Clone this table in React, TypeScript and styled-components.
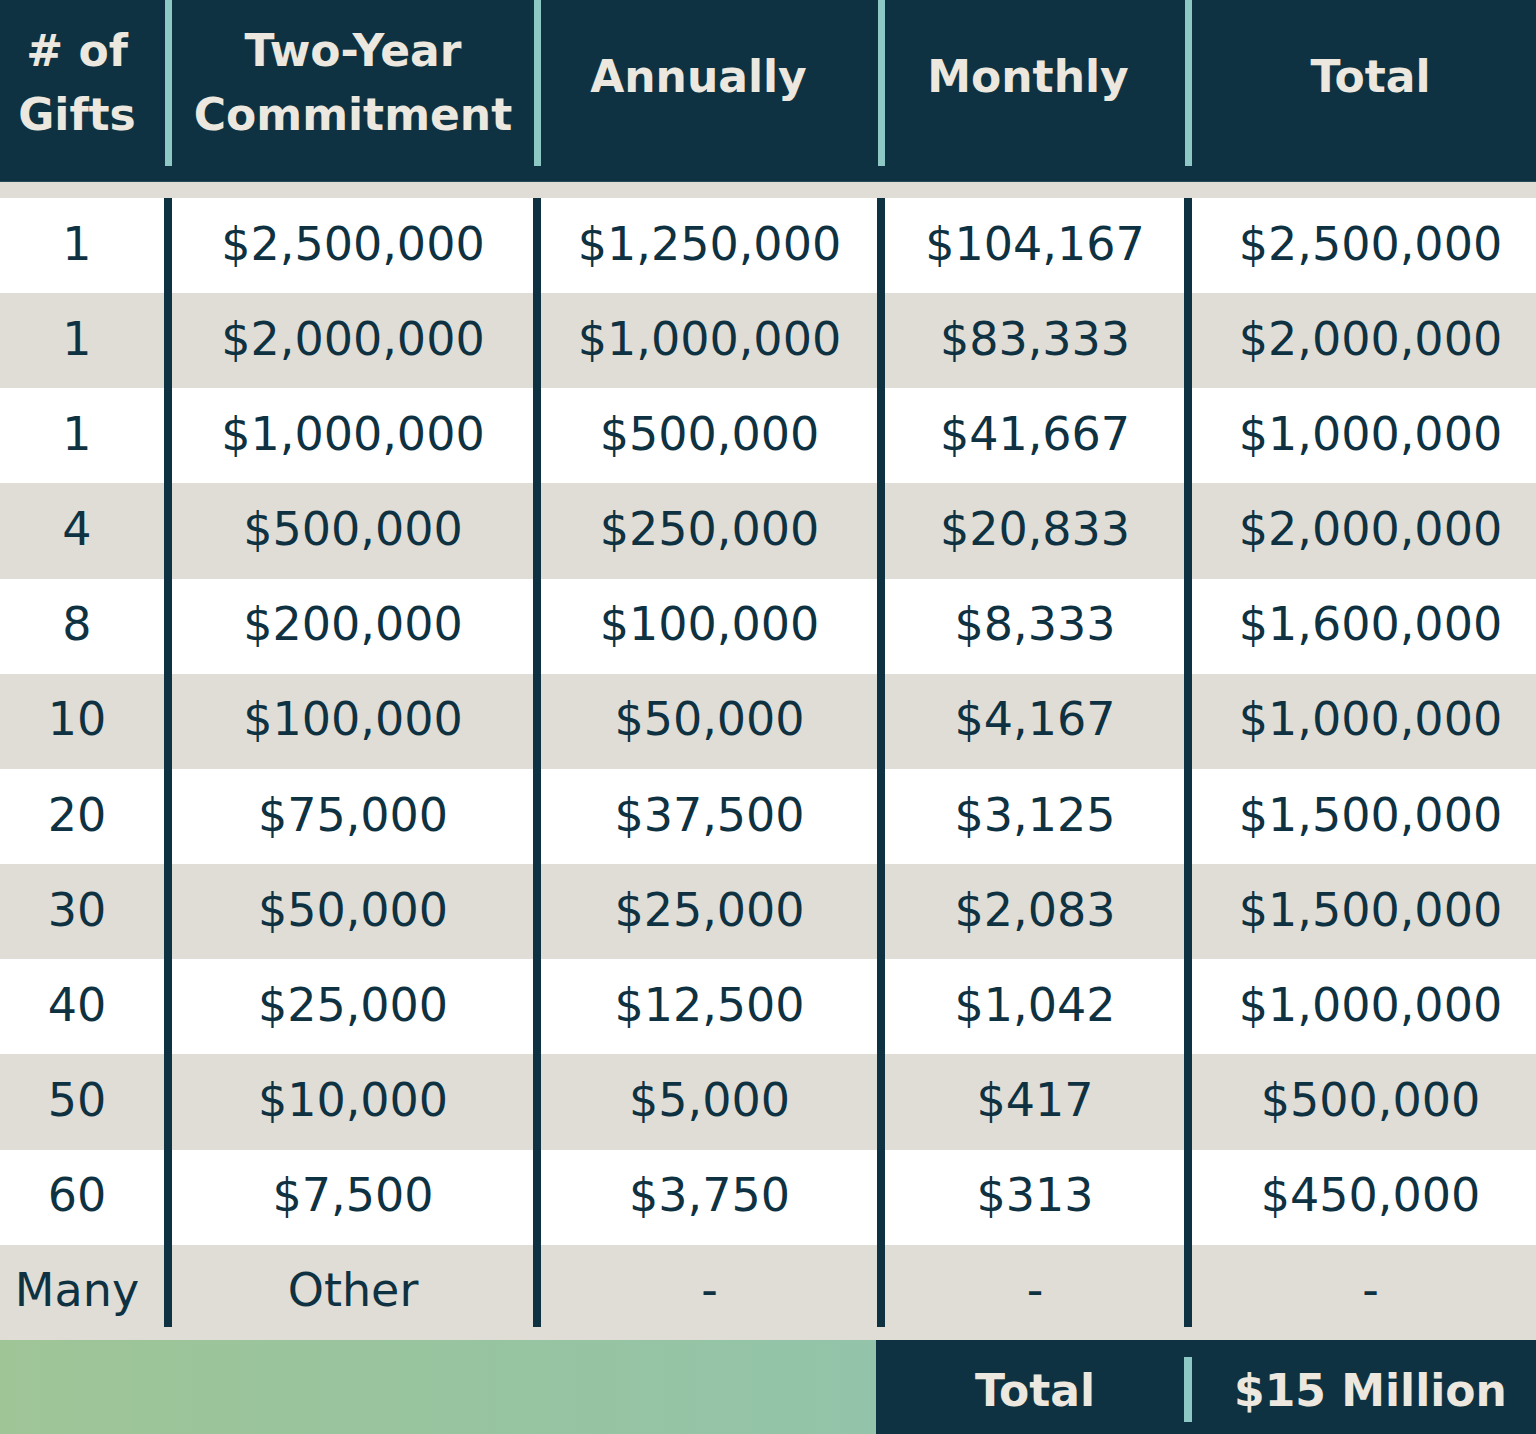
import React from "react";
import styled, { createGlobalStyle } from "styled-components";

const NAVY = "#0f3242";
const TEAL = "#8dc8c4";
const CREAM = "#ece8df";
const GRAY = "#e0ddd6";

const GlobalStyle = createGlobalStyle`
  html, body {
    margin: 0;
    padding: 0;
    background: #ffffff;
  }
  body {
    font-family: "DejaVu Sans", "Liberation Sans", sans-serif;
    color: ${NAVY};
  }
  * { box-sizing: border-box; }
`;

const COLS = "164px 9px 360px 9px 335px 9px 298px 9px 1fr";

const Page = styled.div`
  width: 1536px;
  height: 1434px;
  overflow: hidden;
  display: flex;
  flex-direction: column;
  background: ${GRAY};
`;

const HeaderBar = styled.div`
  background: ${NAVY};
  height: 182px;
  padding-bottom: 15px;
  border-bottom: 1px solid #274a58;
`;

const HeaderGrid = styled.div`
  display: grid;
  grid-template-columns: ${COLS};
  height: 100%;
`;

const HeadCell = styled.div<{ $shiftLeft?: number; $shiftRight?: number; $raise?: number }>`
  display: flex;
  align-items: center;
  justify-content: center;
  text-align: center;
  color: ${CREAM};
  font-weight: 700;
  font-size: 44px;
  line-height: 64px;
  padding-right: ${(p) => p.$shiftLeft ?? 0}px;
  padding-left: ${(p) => p.$shiftRight ?? 0}px;
  padding-bottom: ${(p) => (p.$raise ?? 0) * 2}px;
  white-space: nowrap;
`;

const HeadDivider = styled.div`
  background: ${TEAL};
  margin: 0 1px;
`;

const Band = styled.div`
  height: 16px;
  background: ${GRAY};
`;

const Body = styled.div`
  display: grid;
  grid-template-rows: repeat(12, 1fr);
  height: 1142px;
`;

const Row = styled.div<{ $alt: boolean }>`
  display: grid;
  grid-template-columns: ${COLS};
  background: ${(p) => (p.$alt ? GRAY : "#ffffff")};
`;

const Cell = styled.div<{ $shiftLeft?: number; $shiftRight?: number }>`
  display: flex;
  align-items: center;
  justify-content: center;
  font-size: 46px;
  line-height: 1;
  color: ${NAVY};
  padding-bottom: 4px;
  padding-right: ${(p) => p.$shiftLeft ?? 0}px;
  padding-left: ${(p) => p.$shiftRight ?? 0}px;
  white-space: nowrap;
`;

const BodyDivider = styled.div<{ $last: boolean }>`
  background: ${NAVY};
  margin-bottom: ${(p) => (p.$last ? 13 : 0)}px;
  margin-right: 1px;
`;

const Footer = styled.div`
  flex: 1;
  display: grid;
  grid-template-columns: 876px 1fr;
`;

const FooterFill = styled.div`
  background: linear-gradient(90deg, #9fc597 0%, #98c49f 50%, #93c4aa 100%);
`;

const FooterBlock = styled.div`
  background: ${NAVY};
  display: grid;
  grid-template-columns: 10px 298px 9px 1fr;
  align-items: stretch;
`;

const FootCell = styled.div<{ $shiftRight?: number }>`
  display: flex;
  align-items: center;
  justify-content: center;
  color: ${CREAM};
  font-weight: 700;
  font-size: 44px;
  padding-left: ${(p) => p.$shiftRight ?? 0}px;
  padding-top: 6px;
  white-space: nowrap;
`;

const FootDivider = styled.div`
  background: ${TEAL};
  margin: 17px 1px 12px 0;
`;

type RowData = [string, string, string, string, string];

const rows: RowData[] = [
  ["1", "$2,500,000", "$1,250,000", "$104,167", "$2,500,000"],
  ["1", "$2,000,000", "$1,000,000", "$83,333", "$2,000,000"],
  ["1", "$1,000,000", "$500,000", "$41,667", "$1,000,000"],
  ["4", "$500,000", "$250,000", "$20,833", "$2,000,000"],
  ["8", "$200,000", "$100,000", "$8,333", "$1,600,000"],
  ["10", "$100,000", "$50,000", "$4,167", "$1,000,000"],
  ["20", "$75,000", "$37,500", "$3,125", "$1,500,000"],
  ["30", "$50,000", "$25,000", "$2,083", "$1,500,000"],
  ["40", "$25,000", "$12,500", "$1,042", "$1,000,000"],
  ["50", "$10,000", "$5,000", "$417", "$500,000"],
  ["60", "$7,500", "$3,750", "$313", "$450,000"],
  ["Many", "Other", "-", "-", "-"],
];

export default function App() {
  return (
    <>
      <GlobalStyle />
      <Page>
        <HeaderBar>
          <HeaderGrid>
            <HeadCell $shiftLeft={10}>
              # of
              <br />
              Gifts
            </HeadCell>
            <HeadDivider />
            <HeadCell>
              Two-Year
              <br />
              Commitment
            </HeadCell>
            <HeadDivider />
            <HeadCell $shiftLeft={22} $raise={6}>
              Annually
            </HeadCell>
            <HeadDivider />
            <HeadCell $shiftLeft={14} $raise={6}>
              Monthly
            </HeadCell>
            <HeadDivider />
            <HeadCell $shiftRight={12} $raise={6}>
              Total
            </HeadCell>
          </HeaderGrid>
        </HeaderBar>
        <Band />
        <Body>
          {rows.map((r, i) => {
            const last = i === rows.length - 1;
            return (
              <Row key={i} $alt={i % 2 === 1}>
                <Cell $shiftLeft={10}>{r[0]}</Cell>
                <BodyDivider $last={last} />
                <Cell>{r[1]}</Cell>
                <BodyDivider $last={last} />
                <Cell>{r[2]}</Cell>
                <BodyDivider $last={last} />
                <Cell>{r[3]}</Cell>
                <BodyDivider $last={last} />
                <Cell $shiftRight={12}>{r[4]}</Cell>
              </Row>
            );
          })}
        </Body>
        <Footer>
          <FooterFill />
          <FooterBlock>
            <div />
            <FootCell>Total</FootCell>
            <FootDivider />
            <FootCell $shiftRight={12}>$15 Million</FootCell>
          </FooterBlock>
        </Footer>
      </Page>
    </>
  );
}
